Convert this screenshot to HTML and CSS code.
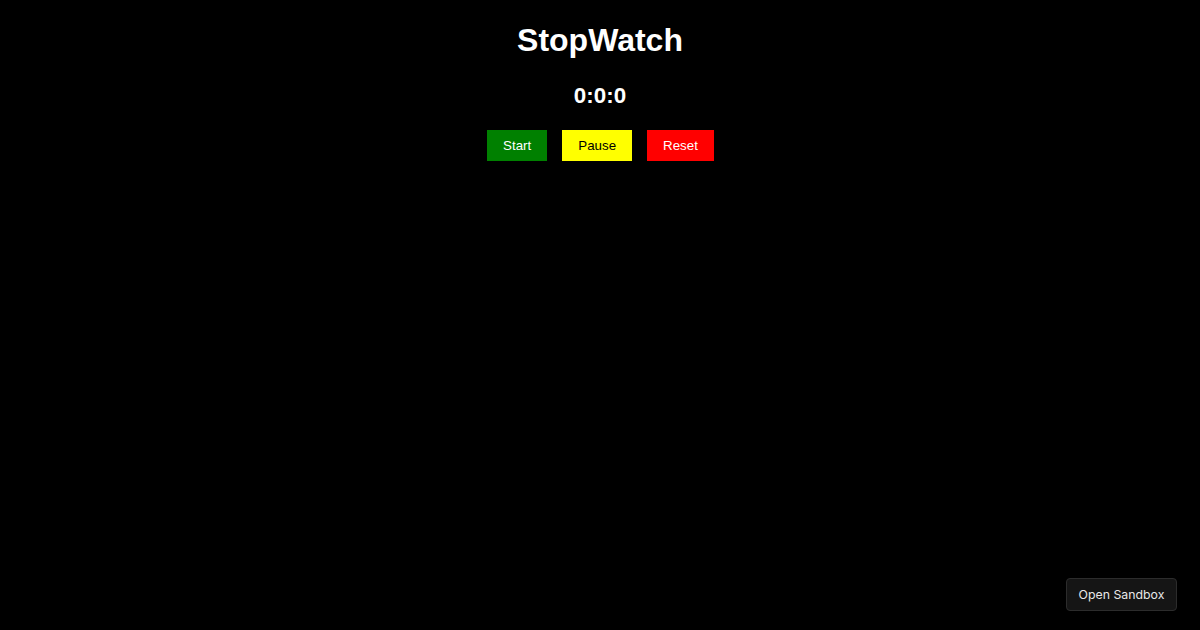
FILE: index.html
```html
<!DOCTYPE html>
<html>
<head>
<meta charset="utf-8">
<link rel="stylesheet" href="styles.css">
</head>
<body>
<main class="app">
  <h1 class="title">StopWatch</h1>
  <h2 class="time">0:0:0</h2>
  <div class="controls">
    <button class="btn btn-start">Start</button>
    <button class="btn btn-pause">Pause</button>
    <button class="btn btn-reset">Reset</button>
  </div>
</main>
<button class="sandbox">Open Sandbox</button>
</body>
</html>
```
FILE: styles.css
```css
html, body {
  margin: 0;
  padding: 0;
  background: #000;
  height: 100%;
}
body {
  font-family: "Liberation Sans", Arial, sans-serif;
  color: #fff;
}
.app {
  display: flex;
  flex-direction: column;
  align-items: center;
  padding-top: 22px;
}
.title {
  font-size: 32px;
  font-weight: bold;
  line-height: 37px;
  margin: 0 0 21px;
}
.time {
  font-size: 22.4px;
  font-weight: bold;
  line-height: 32px;
  margin: 0 0 18px;
}
.controls {
  display: flex;
  gap: 15px;
  padding-left: 1px;
}
.btn {
  font-family: "Liberation Sans", Arial, sans-serif;
  font-size: 13.33px;
  line-height: 15px;
  padding: 8px 16px;
  border: none;
  border-radius: 0;
}
.btn-start { background: #008000; color: #fff; }
.btn-pause { background: #ffff00; color: #000; }
.btn-reset { background: #ff0000; color: #fff; }
.sandbox {
  position: fixed;
  right: 23px;
  bottom: 19px;
  width: 111px;
  height: 33px;
  background: #151515;
  color: #e8e8e8;
  border: 1px solid #2c2c2c;
  border-radius: 4px;
  font-family: Inter, "Noto Sans", sans-serif;
  font-size: 12.3px;
  padding: 0;
}
```
